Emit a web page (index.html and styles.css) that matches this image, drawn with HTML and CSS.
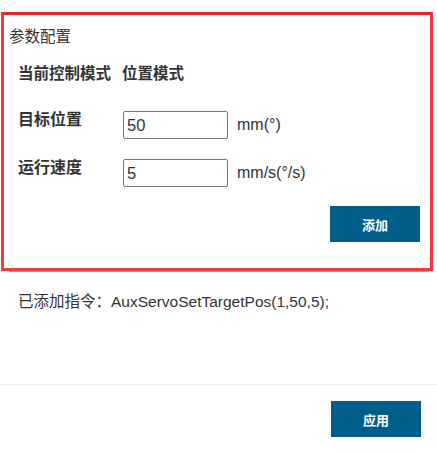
FILE: index.html
```html
<!DOCTYPE html>
<html lang="zh">
<head>
<meta charset="utf-8">
<link rel="stylesheet" href="styles.css">
</head>
<body>
<div class="page">
  <div class="panel">
    <div class="panel-title">参数配置</div>
    <div class="mode"><span>当前控制模式</span><span class="mode-val">位置模式</span></div>
    <div class="row">
      <span class="label">目标位置</span>
      <input class="field" type="text" value="50">
      <span class="unit">mm(°)</span>
    </div>
    <div class="row row2">
      <span class="label">运行速度</span>
      <input class="field" type="text" value="5">
      <span class="unit">mm/s(°/s)</span>
    </div>
    <div class="actions"><button class="btn">添加</button></div>
  </div>
  <div class="underline"></div>
  <div class="result">已添加指令：AuxServoSetTargetPos(1,50,5);</div>
  <div class="footer"><button class="btn">应用</button></div>
</div>
</body>
</html>
```
FILE: styles.css
```css
html, body {
  margin: 0;
  padding: 0;
  background: #fff;
}
body {
  font-family: "Liberation Sans", "Noto Sans CJK SC", sans-serif;
  color: #333;
}
.page {
  width: 437px;
  padding-top: 12px;
}
.panel {
  margin-left: 1px;
  width: 426px;
  border: 3px solid #f9393e;
  border-top-color: #ee2229;
  padding: 12px 0 26px 0;
}
.panel-title {
  font-size: 15.5px;
  line-height: 20px;
  padding-left: 5px;
  color: #333;
}
.mode {
  margin-top: 17px;
  padding-left: 14px;
  font-size: 15.5px;
  line-height: 20px;
  font-weight: bold;
  display: flex;
  gap: 11px;
}
.row {
  margin-top: 27px;
  padding-left: 14px;
  display: flex;
  align-items: center;
}
.row2 {
  margin-top: 20px;
}
.label {
  width: 105px;
  font-size: 16px;
  line-height: 20px;
  font-weight: bold;
  align-self: flex-start;
  margin-top: -1px;
}
.field {
  box-sizing: border-box;
  width: 105px;
  height: 28px;
  border: 1px solid #767676;
  border-radius: 2px;
  padding: 0 3px;
  margin: 0;
  font-family: "Liberation Sans", sans-serif;
  font-size: 16.5px;
  color: #333;
  outline: none;
}
.unit {
  margin-left: 9px;
  font-size: 16px;
  line-height: 20px;
  color: #333;
}
.actions {
  margin-top: 19px;
  display: flex;
  justify-content: flex-end;
  padding-right: 10px;
}
.btn {
  width: 90px;
  height: 36px;
  border: none;
  border-radius: 0;
  background: #005e8a;
  color: #fff;
  font-family: "Liberation Sans", "Noto Sans CJK SC", sans-serif;
  font-size: 13px;
  font-weight: bold;
  padding: 0;
  margin: 0;
}
.underline {
  margin-left: 9px;
  width: 420px;
  height: 1px;
  background: #94b84a;
}
.result {
  margin-top: 20px;
  padding-left: 18px;
  font-size: 15.5px;
  line-height: 20px;
  color: #333;
}
.footer {
  margin-top: 72px;
  border-top: 1px solid #eeeeee;
  padding-top: 16px;
  display: flex;
  justify-content: flex-end;
  padding-right: 16px;
}
```
